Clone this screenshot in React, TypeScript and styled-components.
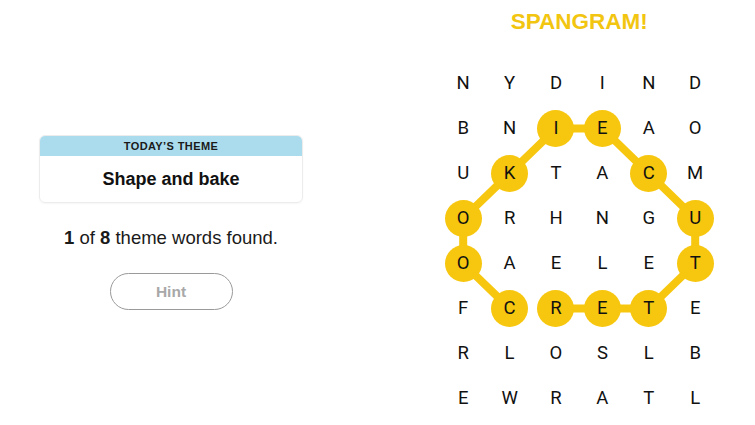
import React from 'react';
import styled, { createGlobalStyle } from 'styled-components';

const COL = 46.4;
const ROW = 45;

const letters = [
  'NYDIND',
  'BNIEAO',
  'UKTACM',
  'ORHNGU',
  'OAELET',
  'FCRETE',
  'RLOSLB',
  'EWRATL',
];

// cooKIEcutter path, [row, col]
const spangram: [number, number][] = [
  [5, 1],
  [4, 0],
  [3, 0],
  [2, 1],
  [1, 2],
  [1, 3],
  [2, 4],
  [3, 5],
  [4, 5],
  [5, 4],
  [5, 3],
  [5, 2],
];

const isFound = (r: number, c: number) =>
  spangram.some(([pr, pc]) => pr === r && pc === c);

function App(): JSX.Element {
  const points = spangram
    .map(([r, c]) => `${c * COL + COL / 2},${r * ROW + ROW / 2}`)
    .join(' ');

  return (
    <Page>
      <GlobalStyle />
      <LeftPanel>
        <ThemeCard>
          <ThemeHeader>Today&rsquo;s theme</ThemeHeader>
          <ThemeBody>Shape and bake</ThemeBody>
        </ThemeCard>
        <Progress>
          <b>1</b> of <b>8</b> theme words found.
        </Progress>
        <HintButton>Hint</HintButton>
      </LeftPanel>
      <RightPanel>
        <Title>SPANGRAM!</Title>
        <Board>
          <Lines width={COL * 6} height={ROW * 8}>
            <polyline
              points={points}
              fill="none"
              stroke="#f7c70f"
              strokeWidth={8}
              strokeLinejoin="round"
            />
          </Lines>
          {letters.map((row, r) =>
            row.split('').map((ch, c) => (
              <Cell key={`${r}-${c}`}>
                <Letter $found={isFound(r, c)}>{ch}</Letter>
              </Cell>
            ))
          )}
        </Board>
      </RightPanel>
    </Page>
  );
}

export default App;

const GlobalStyle = createGlobalStyle`
  body {
    margin: 0;
    background: #fff;
    font-family: "Liberation Sans", Arial, sans-serif;
    color: #111;
  }
`;

const Page = styled.div`
  width: 755px;
  height: 425px;
  display: flex;
  overflow: hidden;
`;

const LeftPanel = styled.div`
  width: 342px;
  padding-top: 135px;
  display: flex;
  flex-direction: column;
  align-items: center;
`;

const ThemeCard = styled.div`
  width: 262px;
  border: 1px solid #ececec;
  border-radius: 6px;
  overflow: hidden;
  box-shadow: 0 1px 2px rgba(0, 0, 0, 0.04);
`;

const ThemeHeader = styled.div`
  height: 20px;
  background: #abdced;
  display: flex;
  align-items: center;
  justify-content: center;
  font-size: 11px;
  font-weight: bold;
  text-transform: uppercase;
  letter-spacing: 0.4px;
  color: #1a1a1a;
`;

const ThemeBody = styled.div`
  height: 46px;
  display: flex;
  align-items: center;
  justify-content: center;
  font-size: 18px;
  font-weight: bold;
`;

const Progress = styled.div`
  margin-top: 24px;
  font-size: 18.5px;
  color: #1a1a1a;
`;

const HintButton = styled.button`
  margin-top: 24px;
  width: 123px;
  height: 37px;
  border: 1.5px solid #9a9a9a;
  border-radius: 19px;
  background: #fff;
  font-family: "Liberation Sans", Arial, sans-serif;
  font-size: 15.5px;
  font-weight: bold;
  color: #a8a8a8;
`;

const RightPanel = styled.div`
  margin-left: 98px;
  width: ${COL * 6}px;
  display: flex;
  flex-direction: column;
  align-items: center;
`;

const Title = styled.div`
  padding-top: 10px;
  height: 24px;
  line-height: 24px;
  font-size: 22.5px;
  font-weight: bold;
  color: #f2c511;
`;

const Board = styled.div`
  position: relative;
  margin-top: 26.5px;
  display: grid;
  grid-template-columns: repeat(6, ${COL}px);
  grid-auto-rows: ${ROW}px;
`;

const Lines = styled.svg`
  position: absolute;
  left: 0;
  top: 0;
  pointer-events: none;
`;

const Cell = styled.div`
  position: relative;
  display: flex;
  align-items: center;
  justify-content: center;
`;

const Letter = styled.span<{ $found: boolean }>`
  width: 37px;
  height: 37px;
  border-radius: 50%;
  display: flex;
  align-items: center;
  justify-content: center;
  font-family: Roboto, "Liberation Sans", sans-serif;
  font-size: 18.5px;
  color: #111;
  background: ${(p) => (p.$found ? '#f7c70f' : 'transparent')};
`;
